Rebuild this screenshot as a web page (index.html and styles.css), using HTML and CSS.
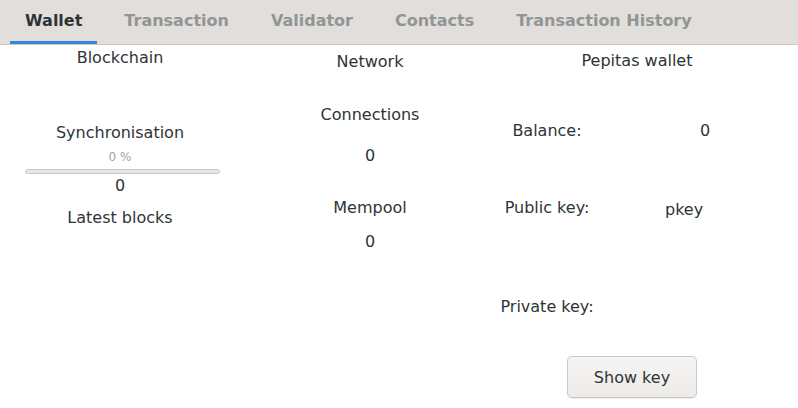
FILE: index.html
```html
<!DOCTYPE html>
<html>
<head>
<meta charset="utf-8">
<link rel="stylesheet" href="styles.css">
</head>
<body>
<div class="tabs">
  <div class="tab active">Wallet</div>
  <div class="tab">Transaction</div>
  <div class="tab">Validator</div>
  <div class="tab">Contacts</div>
  <div class="tab">Transaction History</div>
</div>
<div class="content">
  <div class="col col1">
    <div class="t-blockchain">Blockchain</div>
    <div class="t-sync">Synchronisation</div>
    <div class="pct">0 %</div>
    <div class="progress"></div>
    <div class="t-zero">0</div>
    <div class="t-latest">Latest blocks</div>
  </div>
  <div class="col col2">
    <div class="t-network">Network</div>
    <div class="t-conn">Connections</div>
    <div class="t-conn0">0</div>
    <div class="t-mempool">Mempool</div>
    <div class="t-mem0">0</div>
  </div>
  <div class="col3">
    <div class="t-wallet">Pepitas wallet</div>
    <div class="kv">
      <div class="label l-balance">Balance:</div>
      <div class="value v-balance">0</div>
      <div class="label l-pub">Public key:</div>
      <div class="value v-pub">pkey</div>
      <div class="label l-priv">Private key:</div>
      <div class="value"></div>
    </div>
    <button class="btn">Show key</button>
  </div>
</div>
</body>
</html>
```
FILE: styles.css
```css
html, body {
  margin: 0;
  padding: 0;
  background: #ffffff;
  width: 798px;
  height: 408px;
  overflow: hidden;
  font-family: "DejaVu Sans", sans-serif;
  color: #2e3436;
}
.tabs {
  display: flex;
  gap: 12px;
  height: 44px;
  background: #e1dedb;
  border-bottom: 1px solid #cdc7c2;
  box-sizing: content-box;
  padding-left: 10px;
}
.tab {
  font-weight: bold;
  font-size: 16px;
  color: #929595;
  padding: 0 15px;
  line-height: 41px;
  border-bottom: 3px solid transparent;
  white-space: nowrap;
}
.tab.active {
  color: #2e3436;
  border-bottom-color: #3584e4;
}
.content {
  display: grid;
  grid-template-columns: 240px 250px 1fr;
  font-size: 16px;
  line-height: 19px;
}
.col {
  display: flex;
  flex-direction: column;
  align-items: center;
}
.col2 { padding-left: 10px; }
.t-blockchain { margin-top: 3px; }
.t-sync { margin-top: 56px; }
.pct { color: #a0a4a4; font-size: 12px; line-height: 14px; margin-top: 8px; }
.progress {
  width: 193px;
  height: 3px;
  border: 1px solid #cdc7c2;
  border-radius: 3px;
  background: #e8e6e3;
  margin-top: 5px;
  margin-left: 5px;
}
.t-zero { margin-top: 2px; }
.t-latest { margin-top: 13px; }
.t-network { margin-top: 7px; }
.t-conn { margin-top: 34px; }
.t-conn0 { margin-top: 22px; }
.t-mempool { margin-top: 33px; }
.t-mem0 { margin-top: 15px; }
.col3 {
  display: flex;
  flex-direction: column;
  align-items: center;
  padding-right: 14px;
}
.t-wallet { margin-top: 6px; }
.kv {
  align-self: stretch;
  display: grid;
  grid-template-columns: 114px 1fr;
}
.label { text-align: center; }
.l-balance { margin-top: 51px; }
.v-balance { margin-top: 51px; padding-left: 96px; }
.l-pub { margin-top: 58px; }
.v-pub { margin-top: 60px; padding-left: 61px; }
.l-priv { margin-top: 78px; }
.btn {
  margin-top: 40px;
  margin-left: -10px;
  width: 130px;
  height: 42px;
  border: 1px solid #cdc7c2;
  border-radius: 5px;
  background: linear-gradient(#f6f5f4, #edebe9);
  font-family: "DejaVu Sans", sans-serif;
  font-size: 16px;
  color: #2e3436;
  box-shadow: 0 1px 1px rgba(0,0,0,0.07);
}
```
